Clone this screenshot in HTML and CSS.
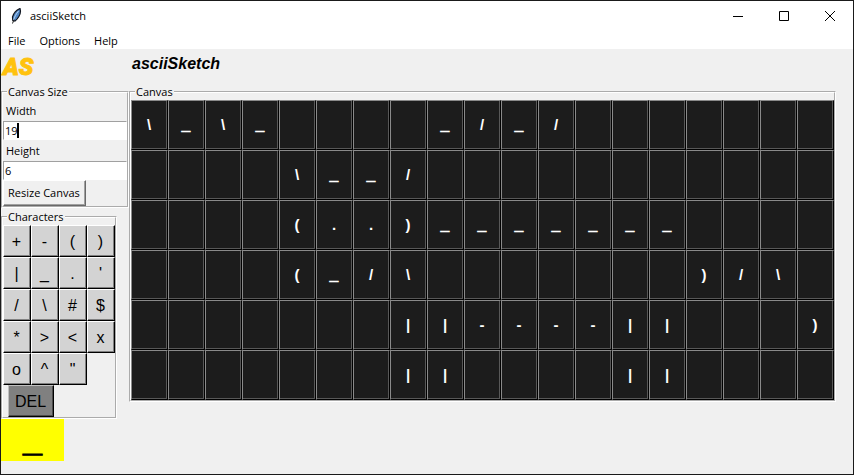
FILE: index.html
```html
<!DOCTYPE html>
<html lang="en">
<head>
<meta charset="utf-8">
<title>asciiSketch</title>
<link rel="stylesheet" href="styles.css">
</head>
<body>
<div class="window">
  <header class="titlebar">
    <svg class="feather" viewBox="0 0 16 16" aria-hidden="true">
      <path d="M12 .5C8.500 2 5.500 5.500 4.500 9l.3 3.500 2.200.5C10 11 12.500 6.500 12.500 3z" fill="#4f86c6" stroke="#10151f" stroke-width="1.200"/>
      <path d="M10.500 3C8 6 6.500 9 5.500 12" fill="none" stroke="#b9d5f2" stroke-width="1"/>
      <path d="M6 11.500L4.500 15.500" fill="none" stroke="#222" stroke-width="1"/>
    </svg>
    <span class="title">asciiSketch</span>
    <button class="winbtn" aria-label="Minimize"><svg viewBox="0 0 10 10"><path d="M0 5.500H10"/></svg></button>
    <button class="winbtn" aria-label="Maximize"><svg viewBox="0 0 10 10"><path d="M.5.5h9v9h-9z"/></svg></button>
    <button class="winbtn" aria-label="Close"><svg viewBox="0 0 10 10"><path d="M0 0L10 10M10 0L0 10"/></svg></button>
  </header>
  <nav class="menubar">
    <button>File</button>
    <button>Options</button>
    <button>Help</button>
  </nav>
  <main class="content">
    <aside class="side">
      <div class="logo">AS</div>
      <fieldset class="group">
        <legend>Canvas Size</legend>
        <label for="width">Width</label>
        <div class="entry"><input id="width" value="19"><span class="caret"></span></div>
        <label for="height">Height</label>
        <div class="entry"><input id="height" value="6"></div>
        <button class="resize">Resize Canvas</button>
      </fieldset>
      <fieldset class="group characters">
        <legend>Characters</legend>
        <div class="keys">
          <button>+</button><button>-</button><button>(</button><button>)</button>
          <button>|</button><button>_</button><button>.</button><button>'</button>
          <button>/</button><button>\</button><button>#</button><button>$</button>
          <button>*</button><button>&gt;</button><button>&lt;</button><button>x</button>
          <button>o</button><button>^</button><button>"</button>
        </div>
        <button class="del">DEL</button>
      </fieldset>
      <div class="selected heavy">_</div>
    </aside>
    <section class="drawing">
      <h1>asciiSketch</h1>
      <fieldset class="group">
        <legend>Canvas</legend>
        <div class="grid" id="grid"></div>
      </fieldset>
    </section>
  </main>
</div>
<script src="script.js"></script>
</body>
</html>
```
FILE: styles.css
```css
* { box-sizing: border-box; }

body {
  margin: 0;
  font: 11px/14px "Open Sans", "Noto Sans", sans-serif;
  color: #000;
}

button, input {
  font: inherit;
  color: inherit;
  margin: 0;
  padding: 0;
  border: 0;
  border-radius: 0;
  background: none;
}

.window {
  min-height: 100vh;
  background: #f0f0f0;
  border: 1px solid #1a1a1a;
}

.titlebar {
  display: flex;
  align-items: center;
  height: 30px;
  padding-left: 7px;
  background: #fff;
}

.feather { width: 16px; height: 16px; }

.title { flex: 1; padding-left: 6px; }

.winbtn {
  display: grid;
  place-items: center;
  width: 46px;
  height: 30px;
}

.winbtn svg {
  width: 10px;
  height: 10px;
  fill: none;
  stroke: #000;
}

.menubar {
  display: flex;
  gap: 14px;
  height: 18px;
  padding: 2px 0 0 7px;
  background: #fff;
}

.content { display: flex; align-items: flex-start; }

.side { width: 128px; flex: none; }

.logo {
  height: 36px;
  padding: 4px 0 0 2px;
  font: italic 900 24px/28px Impact, Roboto, sans-serif;
  color: #ffc20e;
  -webkit-text-stroke: 1px #ffc20e;
}

.group {
  min-width: 0;
  margin: 0;
  padding: 1px 0 0;
  border: 2px groove #fff;
}

.group legend {
  height: 14px;
  margin-left: 4px;
  padding: 0 1px;
}

.group label {
  display: block;
  height: 21px;
  padding: 4px 3px 0;
}

.entry { position: relative; height: 19px; }

.entry input {
  display: block;
  width: 100%;
  height: 19px;
  padding-left: 1px;
  background: #fff;
  border: 1px solid;
  border-color: #a0a0a0 #fff #fff #a0a0a0;
}

.caret {
  position: absolute;
  left: 14px;
  top: 2px;
  width: 2px;
  height: 15px;
  background: #000;
}

.resize {
  display: block;
  height: 26px;
  padding: 0 5px 0 4px;
  border: 1px solid;
  border-color: #fff #696969 #696969 #fff;
  box-shadow: inset -1px -1px #a0a0a0;
}

.characters { width: max-content; margin-top: 2px; }

.keys {
  display: grid;
  grid-template-columns: repeat(4, 28px);
  grid-auto-rows: 32px;
}

.keys button, .del {
  padding: 2px 1px 0 0;
  font: 16px/20px "Liberation Sans", sans-serif;
  background: #d3d3d3;
  border: 1px solid;
  border-color: #fff #000 #000 #fff;
  box-shadow: inset -1px -1px #808080;
}

.del {
  display: block;
  height: 32px;
  margin-left: 5px;
  padding: 2px 7px 0 6px;
  background: #808080;
  border-color: #c0c0c0 #000 #000 #c0c0c0;
  box-shadow: inset -1px -1px #4c4c4c;
}

.selected {
  width: 63px;
  height: 42px;
  font: bold 34px/40px "Liberation Sans", sans-serif;
  text-align: center;
  background: #ff0;
}

.heavy { -webkit-text-stroke: 1px; }

.drawing h1 {
  height: 36px;
  margin: 0;
  padding: 6px 0 0 3px;
  font: italic bold 16px/18px "Liberation Sans", sans-serif;
}

.grid {
  display: grid;
  grid-template-columns: repeat(19, 37px);
  grid-auto-rows: 50px;
}

.grid button {
  padding-right: 1px;
  font: bold 15px/18px "Liberation Sans", sans-serif;
  color: #fff;
  background: #1c1c1c;
  border: 1px solid;
  border-color: #8a8a8a #000 #000 #8a8a8a;
  box-shadow: inset -1px -1px #585858;
}
```
FILE: script.js
```js
const COLUMNS = 19;

const rows = [
  "\\_\\_    _/_/",
  "    \\__/",
  "    (..)_______",
  "    (_/\\       )/\\",
  "       ||----||   )",
  "       ||    ||"
];

const grid = document.getElementById("grid");

for (const row of rows) {
  for (const character of row.padEnd(COLUMNS)) {
    const cell = document.createElement("button");
    cell.textContent = character;
    if (character === "_") cell.className = "heavy";
    grid.append(cell);
  }
}
```
